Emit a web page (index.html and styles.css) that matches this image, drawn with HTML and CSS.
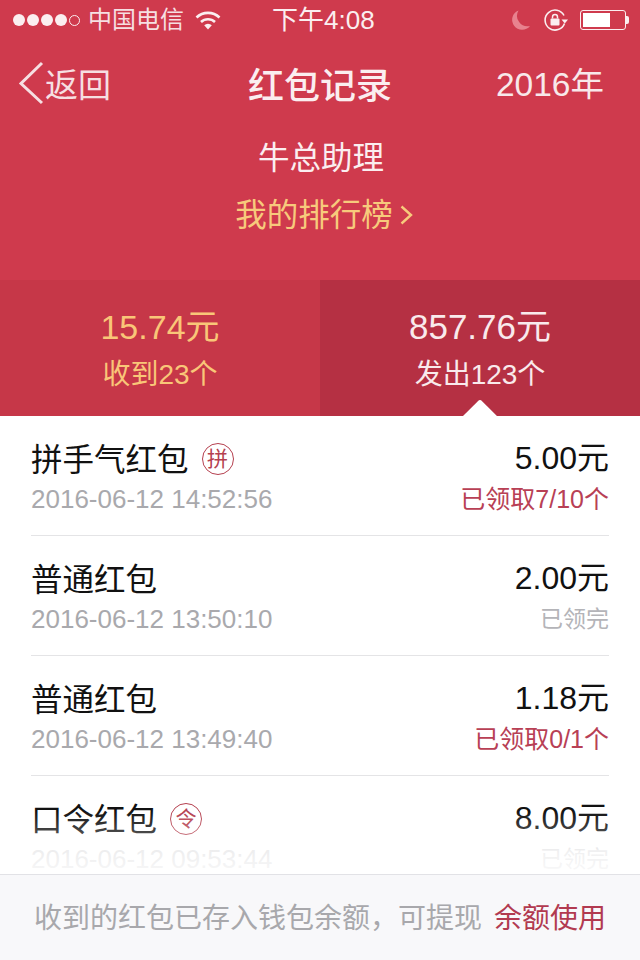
FILE: index.html
```html
<!DOCTYPE html>
<html lang="zh-CN">
<head>
  <meta charset="UTF-8" />
  <title>红包记录</title>
  <link rel="stylesheet" href="styles.css">
</head>
<body>
  <div class="phone">
    <header class="top">
      <div class="status">
        <div class="status-left">
          <span class="dots"><i></i><i></i><i></i><i></i><i class="empty"></i></span>
          <span class="carrier">中国电信</span>
          <svg class="wifi" width="26" height="20" viewBox="0 0 26 20">
            <path d="M1.500 7.500a16.500 16.500 0 0 1 23 0" fill="none" stroke="#fbeef0" stroke-width="2.600"/>
            <path d="M6 12a10.200 10.200 0 0 1 14 0" fill="none" stroke="#fbeef0" stroke-width="2.600"/>
            <path d="M9.200 15.200a5.400 5.400 0 0 1 7.600 0L13 19.400z" fill="#fbeef0"/>
          </svg>
        </div>
        <div class="clock">下午4:08</div>
        <div class="status-right">
          <svg class="moon" width="20" height="22" viewBox="0 0 20 22">
            <path d="M7.500 1.500A10 10 0 1 0 19 17 A10.500 10.500 0 0 1 7.500 1.500z" fill="#e8828e"/>
          </svg>
          <svg class="lock" width="26" height="22" viewBox="0 0 26 22">
            <path d="M21.500 14.500A10 10 0 1 1 21 6.500" fill="none" stroke="#fbeef0" stroke-width="1.600"/>
            <path d="M18.500 10.500h6.500l-3.200 4z" fill="#fbeef0"/>
            <rect x="7.500" y="9.500" width="9" height="7" rx="1" fill="#fbeef0"/>
            <path d="M9.500 9.500V8a2.500 2.500 0 0 1 5 0v1.500" fill="none" stroke="#fbeef0" stroke-width="1.500"/>
          </svg>
          <div class="battery"><div class="battery-box"><div class="battery-fill"></div></div><div class="battery-tip"></div></div>
        </div>
      </div>
      <nav class="nav">
        <div class="back">
          <svg width="28" height="44" viewBox="0 0 28 44"><path d="M25 2 4 22.500 25 42" fill="none" stroke="#f6dfe2" stroke-width="3"/></svg>
          <span>返回</span>
        </div>
        <div class="title">红包记录</div>
        <div class="year">2016年</div>
      </nav>
      <div class="owner">牛总助理</div>
      <div class="rank">我的排行榜<svg class="rank-arrow" width="13" height="20" viewBox="0 0 13 20"><path d="M1.500 1.500 11 10 1.500 18.500" fill="none" stroke="#f7ca7c" stroke-width="2.400"/></svg></div>
    </header>

    <section class="tabs">
      <div class="tab tab-in">
        <div class="tab-amount">15.74元</div>
        <div class="tab-count">收到23个</div>
      </div>
      <div class="tab tab-out">
        <div class="tab-amount">857.76元</div>
        <div class="tab-count">发出123个</div>
        <div class="tab-caret"></div>
      </div>
    </section>

    <ul class="list">
      <li class="row">
        <div class="row-main">
          <div class="row-name">拼手气红包<span class="seal">拼</span></div>
          <div class="row-time">2016-06-12 14:52:56</div>
        </div>
        <div class="row-side">
          <div class="row-amount">5.00元</div>
          <div class="row-state open">已领取7/10个</div>
        </div>
      </li>
      <li class="row">
        <div class="row-main">
          <div class="row-name">普通红包</div>
          <div class="row-time">2016-06-12 13:50:10</div>
        </div>
        <div class="row-side">
          <div class="row-amount">2.00元</div>
          <div class="row-state">已领完</div>
        </div>
      </li>
      <li class="row">
        <div class="row-main">
          <div class="row-name">普通红包</div>
          <div class="row-time">2016-06-12 13:49:40</div>
        </div>
        <div class="row-side">
          <div class="row-amount">1.18元</div>
          <div class="row-state open">已领取0/1个</div>
        </div>
      </li>
      <li class="row">
        <div class="row-main">
          <div class="row-name">口令红包<span class="seal">令</span></div>
          <div class="row-time">2016-06-12 09:53:44</div>
        </div>
        <div class="row-side">
          <div class="row-amount">8.00元</div>
          <div class="row-state">已领完</div>
        </div>
      </li>
    </ul>

    <div class="fade"></div>
    <footer class="foot">
      <span class="foot-note">收到的红包已存入钱包余额，可提现</span>
      <span class="foot-link">余额使用</span>
    </footer>
  </div>
</body>
</html>
```

FILE: styles.css
```css
* {
  box-sizing: border-box;
}
html, body {
  margin: 0;
  padding: 0;
}
body {
  background-color: #fff;
  font-family: "Liberation Sans", "Noto Sans CJK SC", sans-serif;
  font-weight: 400;
}
.phone {
  position: relative;
  width: 640px;
  height: 960px;
  overflow: hidden;
}

/* red header */
.top {
  height: 280px;
  background-color: #cf3a4d;
  color: #fbeef0;
  text-align: center;
}
.status {
  display: flex;
  align-items: center;
  justify-content: space-between;
  height: 40px;
  padding: 0 11px 0 13px;
  position: relative;
}
.status-left, .status-right {
  display: flex;
  align-items: center;
}
.dots {
  display: flex;
  gap: 2px;
  margin-right: 8px;
}
.dots i {
  width: 12px;
  height: 12px;
  border-radius: 50%;
  background-color: #fbeef0;
}
.dots i.empty {
  width: 11px;
  height: 11px;
  margin-top: 1px;
  background: none;
  border: 1px solid #fbeef0;
}
.carrier {
  font-size: 24px;
  line-height: 40px;
  color: #f6dfe2;
  margin-right: 11px;
}
.clock {
  position: absolute;
  left: 272px;
  top: 0;
  font-size: 26px;
  line-height: 40px;
  white-space: nowrap;
}
.moon {
  margin-right: 12px;
}
.lock {
  margin-right: 11px;
}
.battery {
  display: flex;
  align-items: center;
}
.battery-box {
  width: 46px;
  height: 20px;
  padding: 2px;
  border: 1px solid #fbeef0;
  border-radius: 3px;
}
.battery-fill {
  width: 27px;
  height: 100%;
  background-color: #fff;
}
.battery-tip {
  width: 3px;
  height: 8px;
  background-color: #fbeef0;
  border-radius: 0 2px 2px 0;
}

.nav {
  display: flex;
  align-items: center;
  justify-content: space-between;
  height: 86px;
  padding: 0 36px 0 17px;
  position: relative;
}
.back {
  display: flex;
  align-items: center;
  font-size: 33px;
  color: #f6dfe2;
}
.title {
  position: absolute;
  left: 0;
  right: 0;
  font-size: 36px;
  font-weight: 500;
  color: #fbeef0;
}
.year {
  font-size: 33.5px;
  padding-bottom: 3px;
  color: #f8e8ea;
}
.owner {
  font-size: 31.5px;
  line-height: 44px;
  margin-top: 10px;
  padding-left: 2px;
}
.rank {
  display: flex;
  align-items: center;
  justify-content: center;
  font-size: 31.5px;
  line-height: 44px;
  margin-top: 13px;
  padding-left: 8px;
  color: #f7ca7c;
}
.rank-arrow {
  margin-left: 7px;
}

/* totals */
.tabs {
  display: flex;
  height: 136px;
}
.tab {
  position: relative;
  flex: 1;
  overflow: hidden;
  text-align: center;
}
.tab-in {
  background-color: #c63748;
  color: #f9c678;
}
.tab-out {
  background-color: #b53043;
  color: #f9eaec;
}
.tab-amount {
  font-size: 35px;
  line-height: 44px;
  margin-top: 25px;
}
.tab-in .tab-amount {
  font-size: 34px;
}
.tab-count {
  font-size: 28px;
  line-height: 40px;
  margin-top: 6px;
}
.tab-caret {
  position: absolute;
  left: 50%;
  bottom: -12px;
  margin-left: -12px;
  width: 24px;
  height: 24px;
  background-color: #fff;
  border-top-left-radius: 3px;
  transform: rotate(45deg);
}

/* records */
.list {
  list-style: none;
  margin: 0;
  padding: 0 31px;
}
.row {
  display: flex;
  justify-content: space-between;
  height: 120px;
  padding-top: 21px;
  border-bottom: 1px solid #e4e4e6;
}
.row-name {
  display: flex;
  align-items: center;
  font-size: 31.5px;
  line-height: 44px;
  padding-top: 1px;
  height: 44px;
  color: #111;
}
.seal {
  display: inline-block;
  width: 32px;
  height: 32px;
  margin-left: 13px;
  margin-top: -2px;
  border: 1px solid #b5404f;
  border-radius: 50%;
  font-size: 21px;
  line-height: 29px;
  text-align: center;
  color: #b5404f;
}
.row-time {
  font-size: 26px;
  line-height: 36px;
  color: #a9a9ad;
}
.row-side {
  text-align: right;
}
.row-amount {
  font-size: 32px;
  line-height: 42px;
  margin-bottom: 2px;
  color: #111;
}
.row-state {
  font-size: 23px;
  line-height: 36px;
  color: #b4b4b8;
}
.row-state.open {
  font-size: 25px;
  color: #b84055;
}

/* bottom bar sits over the list */
.fade {
  position: absolute;
  left: 0;
  right: 0;
  bottom: 85px;
  height: 65px;
  background: linear-gradient(to bottom, rgba(255, 255, 255, 0), rgba(255, 255, 255, 0.3) 45%, rgba(255, 255, 255, 0.8) 62%, rgba(255, 255, 255, 0.92));
}
.foot {
  position: absolute;
  left: 0;
  right: 0;
  bottom: 0;
  display: flex;
  align-items: center;
  justify-content: space-between;
  height: 86px;
  padding: 0 34px 4px;
  background-color: #f8f8fa;
  border-top: 1px solid #e2e2e6;
  font-size: 28px;
}
.foot-note {
  color: #a8a8ac;
}
.foot-link {
  color: #b23a50;
}
```
